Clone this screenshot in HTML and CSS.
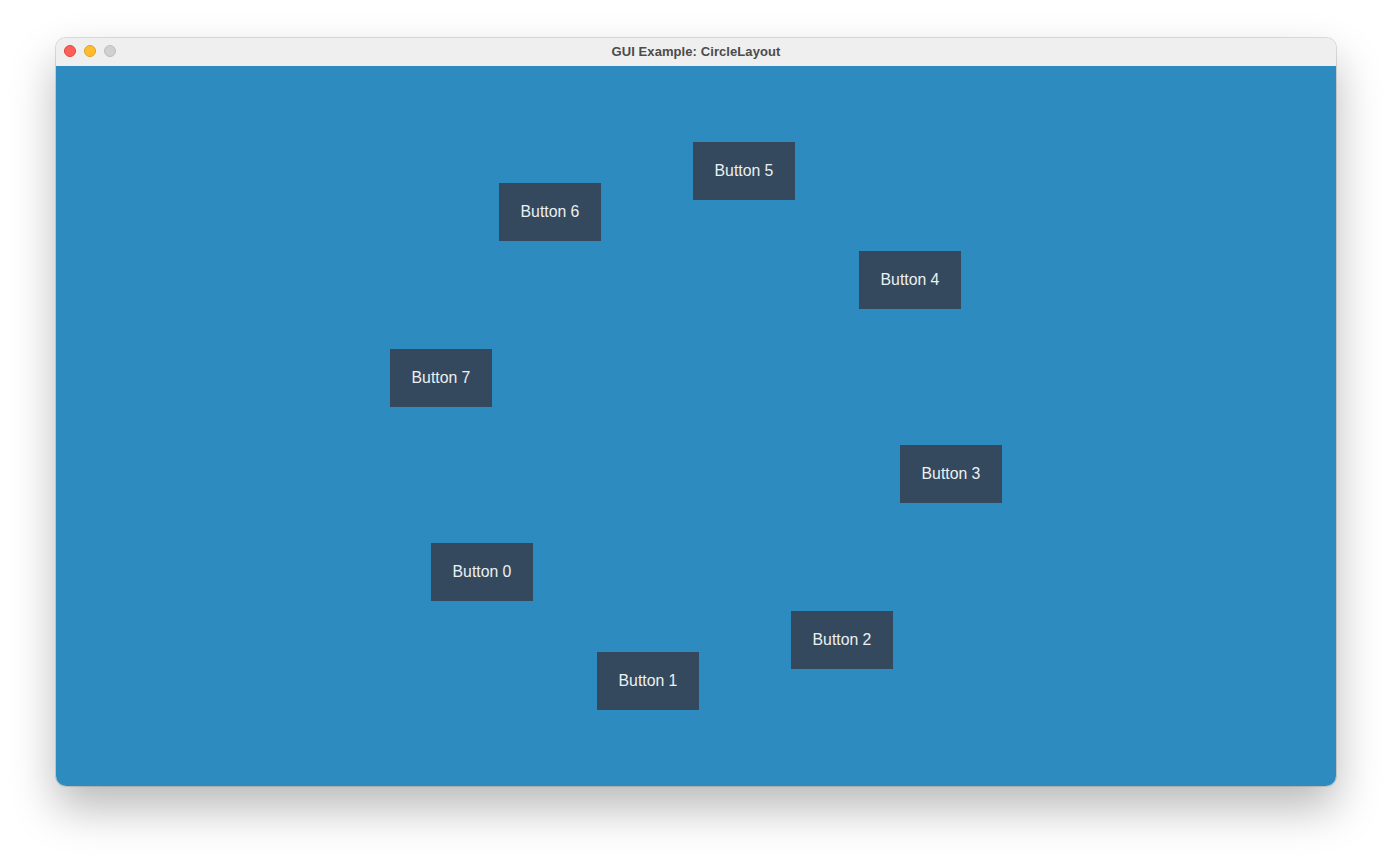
FILE: index.html
```html
<!DOCTYPE html>
<html>
<head>
<meta charset="utf-8">
<link rel="stylesheet" href="styles.css">
</head>
<body>
<div class="window">
  <div class="titlebar">
    <div class="lights">
      <span class="light red"></span>
      <span class="light yellow"></span>
      <span class="light grey"></span>
    </div>
    <div class="title">GUI Example: CircleLayout</div>
  </div>
  <div class="canvas">
    <div class="btn" style="left:375px;top:477px">Button 0</div>
    <div class="btn" style="left:541px;top:586px">Button 1</div>
    <div class="btn" style="left:735px;top:545px">Button 2</div>
    <div class="btn" style="left:844px;top:379px">Button 3</div>
    <div class="btn" style="left:803px;top:185px">Button 4</div>
    <div class="btn" style="left:637px;top:76px">Button 5</div>
    <div class="btn" style="left:443px;top:117px">Button 6</div>
    <div class="btn" style="left:334px;top:283px">Button 7</div>
  </div>
</div>
</body>
</html>
```
FILE: styles.css
```css
html, body {
  margin: 0;
  padding: 0;
  background: #ffffff;
  width: 1392px;
  height: 860px;
  overflow: hidden;
  font-family: "Liberation Sans", Arial, sans-serif;
}
body {
  padding: 38px 0 0 56px;
  box-sizing: border-box;
}
.window {
  width: 1280px;
  height: 748px;
  border-radius: 10px;
  overflow: hidden;
  box-shadow: 0 0 0 1px rgba(0,0,0,0.12), 0 22px 45px rgba(0,0,0,0.28);
  display: flex;
  flex-direction: column;
}
.titlebar {
  height: 28px;
  background: #efefef;
  position: relative;
  display: flex;
  align-items: center;
  justify-content: center;
  flex: none;
}
.lights {
  position: absolute;
  left: 8px;
  top: 7px;
  display: flex;
  gap: 8px;
}
.light {
  width: 12px;
  height: 12px;
  border-radius: 50%;
  box-sizing: border-box;
}
.red { background: #fe5f57; border: 0.5px solid #e14640; }
.yellow { background: #febc2e; border: 0.5px solid #dfa023; }
.grey { background: #d0d0d0; border: 0.5px solid #bdbdbd; }
.title {
  font-size: 13px;
  font-weight: bold;
  color: #4b4b4b;
  letter-spacing: 0.08px;
  padding-bottom: 2px;
}
.canvas {
  flex: 1;
  position: relative;
  background: #2e8bc0;
}
.btn {
  position: absolute;
  width: 102px;
  height: 58px;
  background: #34495e;
  color: #ecf0f1;
  font-size: 15.8px;
  display: flex;
  align-items: center;
  justify-content: center;
}
```
